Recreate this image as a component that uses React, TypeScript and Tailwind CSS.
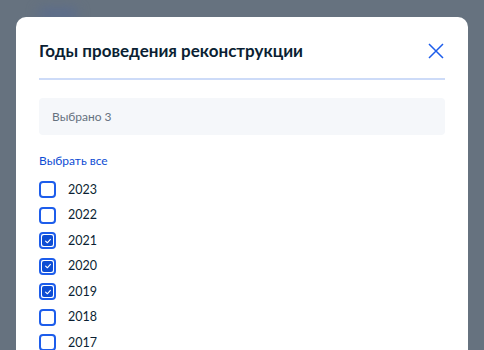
const years = [
  { year: 2023, checked: false },
  { year: 2022, checked: false },
  { year: 2021, checked: true },
  { year: 2020, checked: true },
  { year: 2019, checked: true },
  { year: 2018, checked: false },
  { year: 2017, checked: false },
  { year: 2016, checked: false },
];

function Checkbox({ checked }: { checked: boolean }) {
  return (
    <span className="flex h-[17px] w-[17px] shrink-0 items-center justify-center rounded-[4px] border-2 border-[#1d5deb] bg-white">
      {checked && (
        <span className="flex h-[11px] w-[11px] items-center justify-center rounded-[2px] bg-[#0d4cd3]">
          <svg viewBox="0 0 10 10" className="h-[8px] w-[8px]" fill="none">
            <path d="M2 5.2 4.2 7.2 8 3" stroke="#fff" strokeWidth="1.4" strokeLinecap="round" strokeLinejoin="round" />
          </svg>
        </span>
      )}
    </span>
  );
}

export default function App() {
  return (
    <div className="relative h-[350px] w-[484px] overflow-hidden bg-[#66727f] font-['Lato',sans-serif]">
      <div className="absolute left-[38px] top-[8px] h-[12px] w-[40px] rounded-full bg-[#5b6c8c] blur-[6px]" />
      <div className="relative ml-4 mt-[17px] h-[400px] w-[452px] rounded-[10px] bg-white px-[23px] pt-[22px]">
        <div className="flex items-center justify-between border-b-2 border-[#cddbf8] pb-[15px]">
          <h2 className="text-[17px] font-bold leading-[24px] text-[#0b1f33]">Годы проведения реконструкции</h2>
          <svg viewBox="0 0 16 16" className="mr-px h-4 w-4" fill="none">
            <path d="M1 1 15 15M15 1 1 15" stroke="#1d5deb" strokeWidth="1.5" />
          </svg>
        </div>
        <div className="mt-[18px] flex h-[37px] items-center rounded-[4px] bg-[#f5f7fa] px-[13px] text-[12px] text-[#66727f]">
          Выбрано 3
        </div>
        <div className="mt-[18px] text-[12px] leading-[16px] text-[#0d4cd3]">Выбрать все</div>
        <div className="mt-[8px] flex flex-col">
          {years.map((y) => (
            <label key={y.year} className="flex h-[25.5px] items-center gap-[12px]">
              <Checkbox checked={y.checked} />
              <span className="text-[12.5px] leading-[16px] text-[#0b1f33]">{y.year}</span>
            </label>
          ))}
        </div>
      </div>
    </div>
  );
}
